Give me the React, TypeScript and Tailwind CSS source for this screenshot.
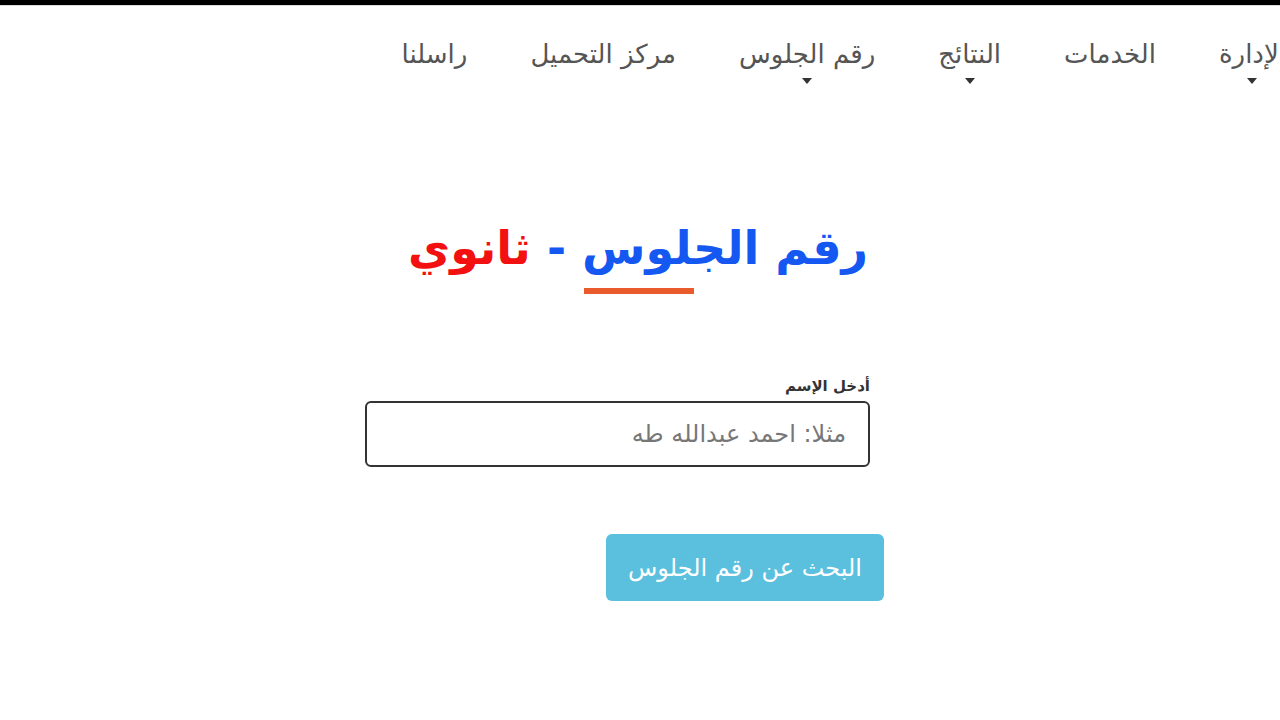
import React from "react";

type NavItem = { label: string; caret?: boolean };

const navItems: NavItem[] = [
  { label: "الإدارة", caret: true },
  { label: "الخدمات" },
  { label: "النتائج", caret: true },
  { label: "رقم الجلوس", caret: true },
  { label: "مركز التحميل" },
  { label: "راسلنا" },
];

function Caret() {
  return (
    <svg width="10" height="6" viewBox="0 0 10 6" className="block">
      <path d="M0 0 L10 0 L5 6 Z" fill="#333" />
    </svg>
  );
}

export default function App() {
  return (
    <div
      dir="rtl"
      className="min-h-screen w-full overflow-hidden bg-white font-['DejaVu_Sans',sans-serif]"
    >
      {/* top bar */}
      <div className="h-[5px] bg-black" />
      <div className="h-px bg-[#ddd]" />

      {/* NAV */}
      <nav className="-mr-[6px] flex items-start gap-[63px] pt-[30px]">
        {navItems.map((item) => (
          <div key={item.label} className="flex flex-col items-center">
            <span className="text-[26px] leading-[36px] text-[#555] whitespace-nowrap">
              {item.label}
            </span>
            <div className="mt-[6px] h-[6px]">{item.caret && <Caret />}</div>
          </div>
        ))}
      </nav>

      {/* FORM */}
      <main className="mr-[410px] w-[505px] pt-[130px]">
        <div className="flex flex-col items-start">
          <h1 className="mr-[2px] whitespace-nowrap text-[46px] font-bold leading-[68px]">
            <span className="text-[#1557f1]">رقم الجلوس - </span>
            <span className="text-[#f21010]">ثانوي</span>
          </h1>
          <div className="mr-[176px] mt-[6px] h-[6px] w-[110px] bg-[#e95a2c]" />
        </div>

        <label className="mt-[82px] block text-[15px] font-bold leading-[20px] text-[#333]">
          أدخل الإسم
        </label>
        <input
          placeholder="مثلا: احمد عبدالله طه"
          className="mt-[5px] block h-[66px] w-[505px] rounded-[6px] border-2 border-[#333] px-[22px] text-[24px] text-[#333] outline-none placeholder:text-[#777]"
        />

        <button className="mr-[-14px] mt-[67px] block h-[67px] w-[278px] rounded-[6px] bg-[#5bc0de] text-[24px] text-white">
          البحث عن رقم الجلوس
        </button>
      </main>
    </div>
  );
}
